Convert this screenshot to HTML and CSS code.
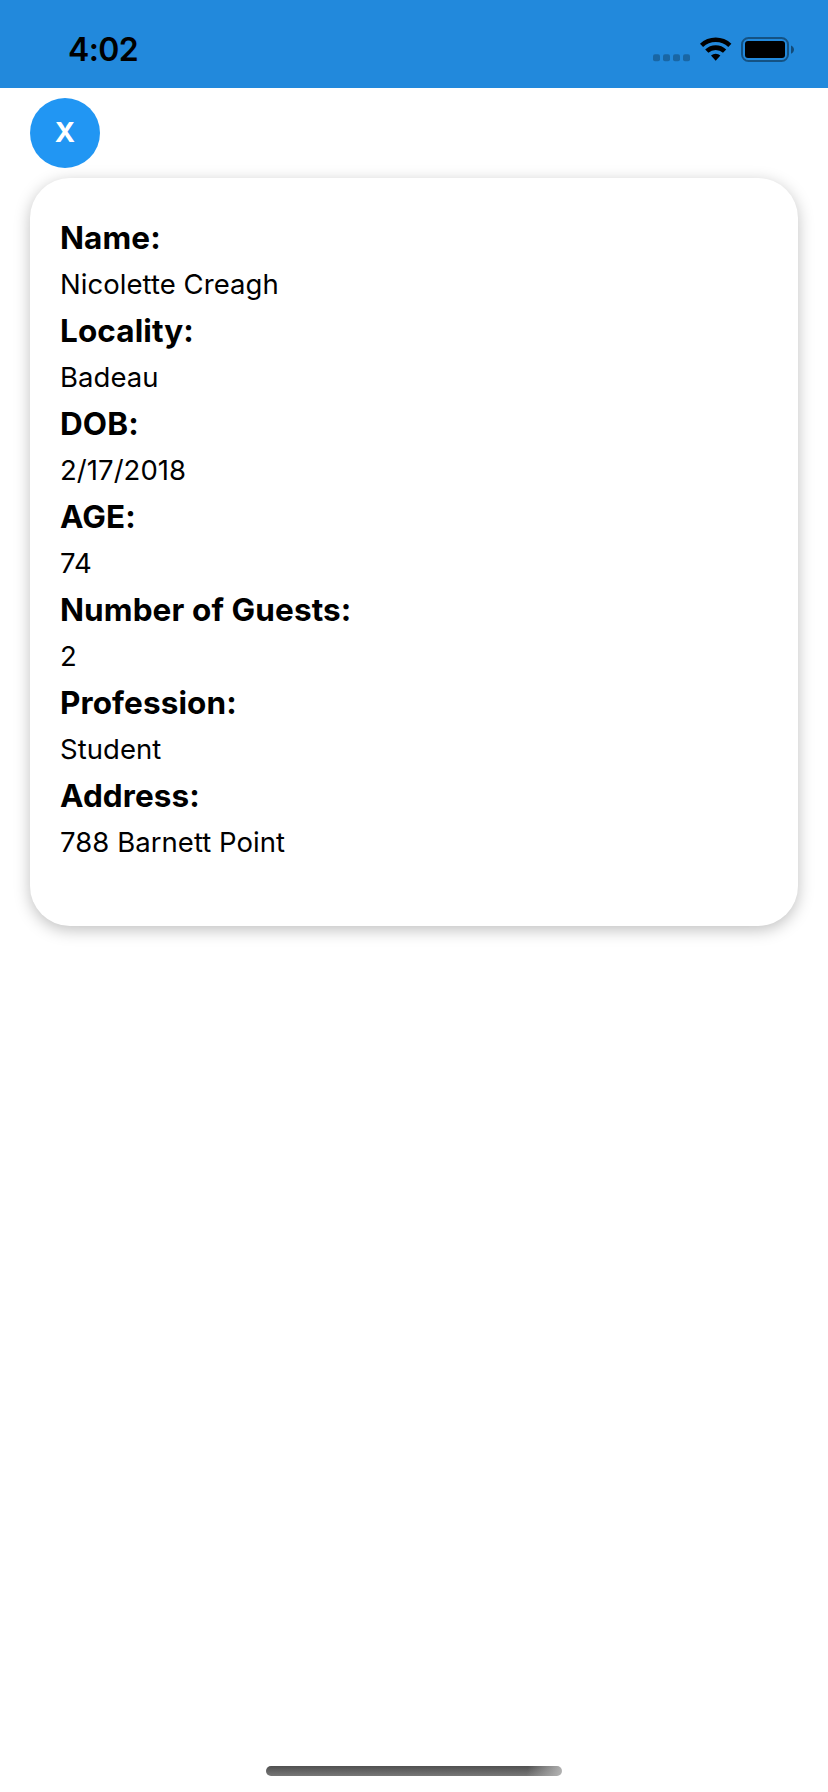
FILE: index.html
```html
<!DOCTYPE html>
<html lang="en">
<head>
<meta charset="utf-8">
<title>Guest details</title>
<link rel="stylesheet" href="styles.css">
</head>
<body>
<div class="screen">
  <header class="status-bar">
    <span class="time">4:02</span>
    <div class="indicators">
      <svg class="signal" width="38" height="8" viewBox="0 0 38 8">
        <rect x="0" y="0.2" width="7" height="7" rx="2"/>
        <rect x="10" y="0.2" width="7" height="7" rx="2"/>
        <rect x="20" y="0.2" width="7" height="7" rx="2"/>
        <rect x="30" y="0.2" width="7" height="7" rx="2"/>
      </svg>
      <svg class="wifi" width="32" height="24" viewBox="0 0 32 24">
        <path d="M0 6.8a22.6 22.6 0 0 1 31.4 0l-3.1 3.2a18.2 18.2 0 0 0-25.2 0z"/>
        <path d="M5.2 12.6a15 15 0 0 1 21 0l-3.2 3.2a10.6 10.6 0 0 0-14.6 0z"/>
        <path d="M11 18.6a7 7 0 0 1 9.4 0l-4.7 5.2z"/>
      </svg>
      <svg class="battery" width="53" height="25" viewBox="0 0 53 25">
        <rect class="battery-shell" x="1" y="1" width="46" height="23" rx="6.5"/>
        <rect x="4" y="4" width="40" height="17" rx="3"/>
        <path class="battery-tip" d="M50 8.4c4 1.6 4 6.8 0 8.4z"/>
      </svg>
    </div>
  </header>
  <main class="content">
    <button class="close-button" type="button">X</button>
    <dl class="card">
      <dt class="label">Name:</dt>
      <dd class="value">Nicolette Creagh</dd>
      <dt class="label">Locality:</dt>
      <dd class="value">Badeau</dd>
      <dt class="label">DOB:</dt>
      <dd class="value">2/17/2018</dd>
      <dt class="label">AGE:</dt>
      <dd class="value">74</dd>
      <dt class="label">Number of Guests:</dt>
      <dd class="value">2</dd>
      <dt class="label">Profession:</dt>
      <dd class="value">Student</dd>
      <dt class="label">Address:</dt>
      <dd class="value">788 Barnett Point</dd>
    </dl>
  </main>
  <div class="home-indicator"></div>
</div>
</body>
</html>
```
FILE: styles.css
```css
* {
  box-sizing: border-box;
}

body {
  margin: 0;
  background: #fff;
  color: #000;
  font-family: Inter, "Liberation Sans", sans-serif;
}

.screen {
  display: flex;
  flex-direction: column;
  align-items: center;
  height: 1792px;
  padding-bottom: 16px;
  overflow: hidden;
}

.status-bar {
  display: flex;
  justify-content: space-between;
  align-items: flex-start;
  width: 100%;
  height: 88px;
  padding: 30px 34px 0 68px;
  background: #2289dc;
}

.time {
  font-size: 32px;
  font-weight: 560;
  line-height: 40px;
  letter-spacing: -0.6px;
}

.indicators {
  display: flex;
  align-items: flex-start;
  padding-top: 7px;
}

.signal {
  margin: 17px 9px 0 0;
  opacity: 0.25;
}

.wifi {
  margin-right: 9px;
}

.battery-shell {
  fill: none;
  stroke: #000;
  stroke-width: 2;
  opacity: 0.4;
}

.battery-tip {
  opacity: 0.45;
}

.content {
  flex: 1;
  width: 100%;
  padding: 10px 30px;
}

.close-button {
  display: flex;
  justify-content: center;
  align-items: center;
  width: 70px;
  height: 70px;
  margin-bottom: 10px;
  padding: 0 0 3px;
  border: 0;
  border-radius: 50%;
  background: #2196f3;
  color: #fff;
  font: 650 27.5px Inter, sans-serif;
}

.card {
  height: 748px;
  margin: 0;
  padding: 37px 30px 30px;
  border-radius: 40px;
  background: #fff;
  box-shadow: 0 4px 16px rgba(0, 0, 0, 0.25);
}

.label {
  height: 48px;
  font-size: 31.5px;
  font-weight: 670;
  line-height: 45px;
  letter-spacing: 0.1px;
}

.value {
  height: 45px;
  margin: 0;
  font-size: 27.5px;
  font-weight: 380;
  line-height: 42px;
  letter-spacing: 0.05px;
}

.home-indicator {
  width: 296px;
  height: 10px;
  border-radius: 5px;
  background:
    linear-gradient(100deg, rgba(180, 180, 180, 0) 88%, #b4b4b4 100%),
    linear-gradient(#505050, #777);
}
```
